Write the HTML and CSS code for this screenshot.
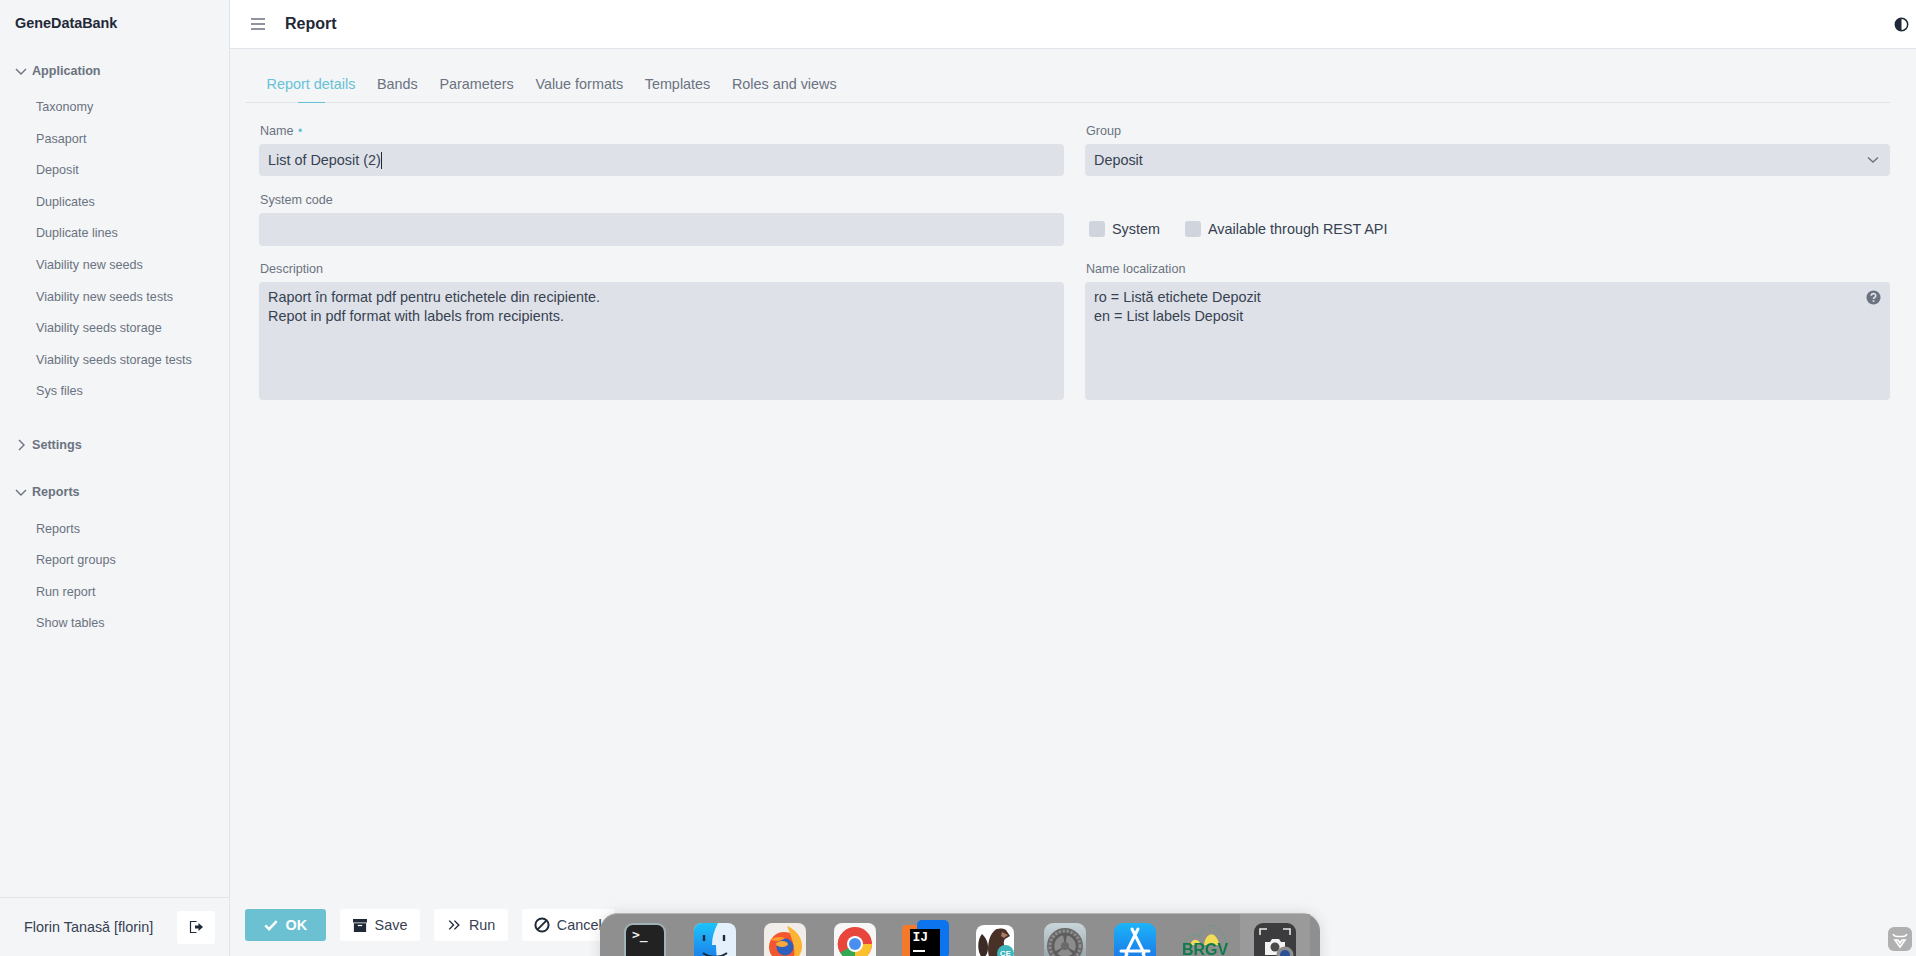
FILE: index.html
```html
<!DOCTYPE html>
<html lang="en">
<head>
	<meta charset="UTF-8">
	<title>Report</title>
	<link rel="stylesheet" href="styles.css">
</head>
<body>
	<div class="app">
		<aside class="sidebar">
			<div class="brand">GeneDataBank</div>
			<nav class="menu">
				<div class="menu-head">
					<svg class="menu-arrow" viewBox="0 0 12 12"><path d="M1 4l5 5 5-5"/></svg>
					<span>Application</span>
				</div>
				<ul class="menu-list">
					<li>Taxonomy</li>
					<li>Pasaport</li>
					<li>Deposit</li>
					<li>Duplicates</li>
					<li>Duplicate lines</li>
					<li>Viability new seeds</li>
					<li>Viability new seeds tests</li>
					<li>Viability seeds storage</li>
					<li>Viability seeds storage tests</li>
					<li>Sys files</li>
				</ul>
				<div class="menu-head">
					<svg class="menu-arrow" viewBox="0 0 12 12"><path d="M4 1l5 5-5 5"/></svg>
					<span>Settings</span>
				</div>
				<div class="menu-head menu-head-next">
					<svg class="menu-arrow" viewBox="0 0 12 12"><path d="M1 4l5 5 5-5"/></svg>
					<span>Reports</span>
				</div>
				<ul class="menu-list menu-list-last">
					<li>Reports</li>
					<li>Report groups</li>
					<li>Run report</li>
					<li>Show tables</li>
				</ul>
			</nav>
			<div class="user">
				<span class="user-name">Florin Tanasă [florin]</span>
				<a class="user-logout" href="#">
					<svg viewBox="0 0 16 16" width="16" height="16"><path class="line" d="M8.5 2.5h-6v11h6"/><path class="fill" d="M7 6.5h3.5V4l4.5 4-4.5 4V9.5H7z"/></svg>
				</a>
			</div>
		</aside>

		<main class="main">
			<header class="topbar">
				<svg class="burger" viewBox="0 0 16 14"><path d="M1 2h14M1 7h14M1 12h14"/></svg>
				<h1 class="title">Report</h1>
				<svg class="theme" viewBox="0 0 16 16"><circle cx="8" cy="8" r="6.6"/><path d="M8 1.4a6.6 6.6 0 0 0 0 13.2z"/></svg>
			</header>

			<div class="content">
				<div class="tabs">
					<a class="tab tab-active" href="#">Report details</a>
					<a class="tab" href="#">Bands</a>
					<a class="tab" href="#">Parameters</a>
					<a class="tab" href="#">Value formats</a>
					<a class="tab" href="#">Templates</a>
					<a class="tab" href="#">Roles and views</a>
				</div>

				<form class="form">
					<div class="field">
						<label>Name <span class="req">•</span></label>
						<div class="input">List of Deposit (2)<span class="caret"></span></div>
					</div>
					<div class="field">
						<label>Group</label>
						<div class="input select">
							Deposit
							<svg class="select-arrow" viewBox="0 0 12 8"><path d="M1 1.5l5 4.5 5-4.5"/></svg>
						</div>
					</div>
					<div class="field">
						<label>System code</label>
						<div class="input input-tall"></div>
					</div>
					<div class="field field-checks">
						<label class="check"><span class="box"></span>System</label>
						<label class="check"><span class="box"></span>Available through REST API</label>
					</div>
					<div class="field">
						<label>Description</label>
						<div class="area">Raport în format pdf pentru etichetele din recipiente.<br>Repot in pdf format with labels from recipients.</div>
					</div>
					<div class="field">
						<label>Name localization</label>
						<div class="area">
							ro = Listă etichete Depozit<br>en = List labels Deposit
							<svg class="help" viewBox="0 0 16 16"><circle cx="8" cy="8" r="7.5"/><path d="M5.6 6.2c0-3 4.8-3 4.8-.1 0 1.9-2.4 1.9-2.4 3.6"/><rect x="7.1" y="10.8" width="1.8" height="1.8"/></svg>
						</div>
					</div>
				</form>
			</div>

			<div class="actions">
				<a class="btn btn-ok" href="#">
					<svg viewBox="0 0 16 16" width="14" height="14"><path d="M1.5 8.5l4.3 4.3 8.7-9.3"/></svg>
					OK
				</a>
				<a class="btn" href="#">
					<svg viewBox="0 0 16 16" width="14" height="14"><path class="fill" d="M0 1h16v4H0zM1 6h14v10H1z"/><path class="cut" d="M5.5 8.6h5"/></svg>
					Save
				</a>
				<a class="btn btn-run" href="#">
					<svg viewBox="0 0 16 16" width="14" height="14"><path class="thin" d="M2.5 3l5 5-5 5M8.5 3l5 5-5 5"/></svg>
					Run
				</a>
				<a class="btn btn-cancel" href="#">
					<svg viewBox="0 0 16 16" width="16" height="16"><circle class="ring" cx="8" cy="8" r="6.6"/><path class="ring" d="M12.6 3.4l-9.2 9.2"/></svg>
					Cancel
				</a>
			</div>
		</main>
	</div>

	<!-- macOS style dock over the page -->
	<div class="dock">
		<div class="dock-cell">
			<div class="icon icon-terminal"><span>&gt;_</span></div>
		</div>
		<div class="dock-cell">
			<svg class="icon" viewBox="0 0 42 42">
				<defs>
					<linearGradient id="finder" x1="0" y1="0" x2="0" y2="1"><stop offset="0" stop-color="#1ec3fa"/><stop offset="1" stop-color="#1a72e8"/></linearGradient>
				</defs>
				<rect width="42" height="42" rx="8" fill="#e4f0fb"/>
				<path d="M8 0h16c-4 8-6 14-6 22h4c0 6 .5 12 2 20H8a8 8 0 0 1-8-8V8a8 8 0 0 1 8-8z" fill="url(#finder)"/>
				<path d="M10 12v6M30 12v6" stroke="#1d2a3a" stroke-width="2.4" fill="none"/>
				<path d="M9 30c7 5 17 5 24 0" stroke="#1d2a3a" stroke-width="2" fill="none"/>
			</svg>
		</div>
		<div class="dock-cell">
			<svg class="icon" viewBox="0 0 42 42">
				<rect width="42" height="42" rx="8" fill="#f1ede9"/>
				<circle cx="20" cy="24" r="15" fill="#f3572f"/>
				<path d="M23 3c8 3 16 11 15 22-1 7-5 11-9 13 3-9 1-18-6-35z" fill="#fbb334"/>
				<circle cx="21" cy="24" r="8.5" fill="#2d5fbd"/>
				<path d="M6 17c4-3 9-4 15-2-2 2-5 3-8 3z" fill="#ff9a2e"/>
				<ellipse cx="18" cy="21" rx="6" ry="3" fill="#f7a83a"/>
			</svg>
		</div>
		<div class="dock-cell">
			<svg class="icon" viewBox="0 0 42 42">
				<rect width="42" height="42" rx="8" fill="#f7f7f7"/>
				<circle cx="21" cy="21" r="17" fill="#e8453c"/>
				<path d="M21 21L6 29.5A17 17 0 0 0 21 38z" fill="#34a853"/>
				<path d="M21 21l-15 8.5A17 17 0 0 1 6.5 12z" fill="#e8453c"/>
				<path d="M21 21h17a17 17 0 0 1-17 17z" fill="#fbc02d"/>
				<circle cx="21" cy="21" r="8" fill="#fff"/>
				<circle cx="21" cy="21" r="6" fill="#4a8ff0"/>
			</svg>
		</div>
		<div class="dock-cell">
			<div class="icon-ij">
				<span class="ij-back-a"></span>
				<span class="ij-back-b"></span>
				<div class="ij-box">IJ<span class="ij-bar"></span></div>
			</div>
		</div>
		<div class="dock-cell">
			<div class="icon-beaver">
				<svg viewBox="0 0 38 38" width="38" height="38">
					<path d="M6 9c-5 6-5 17 0 24 4-1 6-5 6-10 0-6-2-10-6-14z" fill="#3b2a25"/>
					<path d="M13 32c-2-9-1-20 5-26 3-3 8-3 12-1l4 6-5 3c-2 3-1 6 0 8l-5 10z" fill="#4a3128"/>
					<path d="M26 7l6 3-4 3-3-2z" fill="#a87c62"/>
				</svg>
				<span class="beaver-ce">CE</span>
			</div>
		</div>
		<div class="dock-cell">
			<svg class="icon" viewBox="0 0 42 42">
				<defs>
					<linearGradient id="gear" x1="0" y1="0" x2="0" y2="1"><stop offset="0" stop-color="#c8d6da"/><stop offset="1" stop-color="#8f9da3"/></linearGradient>
				</defs>
				<rect width="42" height="42" rx="9" fill="url(#gear)"/>
				<circle cx="21" cy="23" r="18" fill="#6a6a6a"/>
				<circle cx="21" cy="23" r="15" fill="none" stroke="#8f8f8f" stroke-width="3" stroke-dasharray="2 2"/>
				<circle cx="21" cy="23" r="12" fill="#8c8c8c" stroke="#5d5d5d" stroke-width="2.5"/>
				<path d="M21 23l-2-11h4zM21 23l-11 6 2 3zM21 23l11 6-2 3z" fill="#5d5d5d"/>
				<circle cx="21" cy="23" r="4" fill="#6a6a6a"/>
			</svg>
		</div>
		<div class="dock-cell">
			<svg class="icon" viewBox="0 0 42 42">
				<defs>
					<linearGradient id="store" x1="0" y1="0" x2="0" y2="1"><stop offset="0" stop-color="#1cb4f8"/><stop offset="1" stop-color="#1a6fe6"/></linearGradient>
				</defs>
				<rect width="42" height="42" rx="9" fill="url(#store)"/>
				<path d="M24 6L12 30M18 6l12 24M7 28h28M10 36l3-5M32 36l-3-5" stroke="#fff" stroke-width="3" stroke-linecap="round" fill="none"/>
			</svg>
		</div>
		<div class="dock-cell">
			<div class="icon-brgv">
				<svg viewBox="0 0 46 24" width="46" height="24">
					<path d="M1 22C5 12 11 9 17 14 21 4 30-1 36 5c5 5 8 11 9 17" fill="none" stroke="#6f9a80" stroke-width="1"/>
					<path d="M8 22c2-6 7-7 10-2v2zM22 22c1-10 8-14 12-8 2 3 3 5 3 8z" fill="#f1dd56"/>
				</svg>
				<span class="brgv-text">BRGV</span>
			</div>
		</div>
		<div class="dock-cell dock-cell-on">
			<div class="icon-shot">
				<svg viewBox="0 0 42 42" width="42" height="42">
					<path d="M6 12V6h7M29 6h7v6" fill="none" stroke="#e8e8e8" stroke-width="1.6"/>
					<path d="M11 19h5l2-3h7l2 3h4v13H11z" fill="#f2f2f2"/>
					<circle cx="21" cy="24" r="4.5" fill="#4a4a4a"/>
					<circle cx="31" cy="32" r="8.5" fill="#8e8e8e"/>
					<circle cx="31" cy="32" r="5" fill="#2c4f96"/>
				</svg>
			</div>
		</div>
	</div>

	<!-- dev tools badge in the corner -->
	<div class="devtools">
		<svg viewBox="0 0 24 24" width="24" height="24"><path d="M5 7c1 2 2 2.5 4 2.5h6c2 0 3-.5 4-2.5M7 13l5 7 5-7h-3l-2 3-2-3z" fill="none" stroke="#fff" stroke-width="1.6"/></svg>
	</div>
</body>
</html>
```

FILE: styles.css
```css
html, body {
	margin: 0;
	height: 100%;
	overflow: hidden;
}
body {
	background: #f3f5f7;
	color: #374151;
	font-family: "Liberation Sans", Arial, sans-serif;
	font-size: 14.4px;
}
a {
	text-decoration: none;
	color: inherit;
}
ul {
	list-style: none;
	margin: 0;
	padding: 0;
}
.app {
	display: flex;
	height: 956px;
}

/* sidebar */
.sidebar {
	width: 229px;
	flex: none;
	display: flex;
	flex-direction: column;
	border-right: 1px solid #e1e4ea;
}
.brand {
	height: 46px;
	line-height: 46px;
	padding-left: 15px;
	font-size: 14.4px;
	font-weight: 700;
	color: #1f2937;
}
.menu {
	flex: 1;
	padding-top: 9px;
}
.menu-head {
	display: flex;
	align-items: center;
	height: 32px;
	padding-left: 15px;
	font-size: 12.6px;
	font-weight: 700;
	color: #6b7280;
}
.menu-head-next {
	margin-top: 14.4px;
}
.menu-arrow {
	width: 12px;
	height: 12px;
	margin-right: 5px;
	fill: none;
	stroke: #6b7280;
	stroke-width: 1.4;
}
.menu-list {
	margin: 5px 0 21.4px;
}
.menu-list-last {
	margin-top: 5.8px;
}
.menu-list li {
	height: 31.6px;
	line-height: 31.6px;
	padding-left: 36px;
	font-size: 12.6px;
	color: #6b7280;
}
.user {
	height: 58px;
	display: flex;
	align-items: center;
	justify-content: space-between;
	padding: 0 14px 0 24px;
	border-top: 1px solid #e1e4ea;
}
.user-logout {
	width: 38px;
	height: 33px;
	display: flex;
	align-items: center;
	justify-content: center;
	background: #fff;
	border-radius: 3px;
}
.line {
	fill: none;
	stroke: #1f2937;
	stroke-width: 1.2;
}
.fill {
	fill: #1f2937;
}

/* main area */
.main {
	flex: 1;
	min-width: 0;
	display: flex;
	flex-direction: column;
}
.topbar {
	height: 48px;
	flex: none;
	display: flex;
	align-items: center;
	background: #fff;
	border-bottom: 1px solid #e1e4ea;
	padding: 0 7px 0 20px;
}
.burger {
	width: 16px;
	height: 14px;
	fill: none;
	stroke: #6b7280;
	stroke-width: 1.6;
}
.title {
	margin: 0 0 0 19px;
	font-size: 16px;
	font-weight: 700;
	color: #1f2937;
	flex: 1;
}
.theme {
	width: 15px;
	height: 15px;
	fill: #1f2937;
}
.theme circle {
	fill: #fff;
	stroke: #1f2937;
	stroke-width: 1.6;
}
.content {
	flex: 1;
	padding: 0 26px 0 15px;
}
.tabs {
	display: flex;
	gap: 21.6px;
	height: 54px;
	box-sizing: border-box;
	padding: 23px 0 0 21.6px;
	border-bottom: 1px solid #e1e4ea;
}
.tab {
	position: relative;
	height: 31px;
	line-height: 24px;
	color: #6b7280;
}
.tab-active {
	color: #67c2d6;
}
.tab-active::after {
	content: "";
	position: absolute;
	left: 31px;
	bottom: 0;
	width: 27px;
	height: 1px;
	background: #67c2d6;
}

/* form */
.form {
	display: grid;
	grid-template-columns: 805px 805px;
	column-gap: 21px;
	padding: 17px 0 0 14px;
}
.field {
	padding-bottom: 12.5px;
}
.field label {
	display: block;
	height: 24px;
	line-height: 22px;
	padding-left: 1px;
	font-size: 12.6px;
	color: #6b7280;
}
.req {
	color: #67c2d6;
	font-size: 12px;
	margin-left: 1px;
}
.input, .area {
	box-sizing: border-box;
	background: #dee1e8;
	border-radius: 4px;
	color: #374151;
	padding: 0 9px;
}
.input {
	display: flex;
	align-items: center;
	height: 32px;
	margin-bottom: 0.5px;
}
.input-tall {
	height: 32.5px;
	margin-bottom: 0;
}
.caret {
	display: inline-block;
	width: 1px;
	height: 17px;
	background: #1f2937;
}
.select {
	justify-content: space-between;
	padding-right: 11px;
}
.select-arrow {
	width: 12px;
	height: 8px;
	fill: none;
	stroke: #6b7280;
	stroke-width: 1.4;
}
.area {
	position: relative;
	height: 117.5px;
	padding-top: 6px;
	line-height: 19.4px;
}
.help {
	position: absolute;
	top: 8px;
	right: 9px;
	width: 15px;
	height: 15px;
}
.help circle {
	fill: #6b7280;
}
.help path {
	fill: none;
	stroke: #dee1e8;
	stroke-width: 1.8;
}
.help rect {
	fill: #dee1e8;
}
.field-checks {
	display: flex;
	align-items: flex-end;
	gap: 25px;
	padding-left: 4px;
	padding-bottom: 21.5px;
}
.field-checks .check {
	display: flex;
	align-items: center;
	height: 16px;
	line-height: 16px;
	padding: 0;
	font-size: 14.4px;
	color: #374151;
}
.box {
	width: 16px;
	height: 16px;
	margin-right: 7px;
	background: #d0d5dd;
	border-radius: 3px;
}

/* bottom buttons */
.actions {
	flex: none;
	display: flex;
	gap: 14px;
	padding: 0 0 15px 15px;
}
.btn {
	display: flex;
	align-items: center;
	gap: 8px;
	height: 32px;
	padding: 0 13px;
	background: #fff;
	border-radius: 3px;
	color: #374151;
}
.btn .thin, .btn .ring {
	fill: none;
	stroke: #1f2937;
	stroke-width: 1.6;
}
.btn .ring {
	stroke-width: 2;
}
.btn .cut {
	stroke: #fff;
	stroke-width: 1.4;
}
.btn-ok {
	padding: 0 18.5px;
	background: #6bc0d2;
	color: #fff;
	font-weight: 700;
}
.btn-ok svg path {
	fill: none;
	stroke: #fff;
	stroke-width: 2.8;
}
.btn-run {
	padding: 0 12.5px;
}
.btn-cancel svg {
	margin: 0 -1px;
}

/* dock */
.dock {
	position: fixed;
	left: 600px;
	top: 913px;
	width: 720px;
	height: 90px;
	box-sizing: border-box;
	padding: 0 10px;
	display: flex;
	background: #8f8f8f;
	border-top: 1px solid #b4b4b4;
	border-radius: 18px;
	box-shadow: 0 0 14px rgba(0, 0, 0, 0.12);
}
.dock-cell {
	width: 70px;
	flex: none;
	display: flex;
	justify-content: center;
	padding-top: 9px;
}
.dock-cell-on {
	background: #9a9a9a;
}
.icon {
	width: 42px;
	height: 42px;
	flex: none;
}
.icon-terminal {
	box-sizing: border-box;
	background: #222;
	border: 2px solid #9fb3b8;
	border-radius: 9px;
	color: #eee;
	font-family: "DejaVu Sans Mono", monospace;
	font-size: 13px;
	font-weight: 700;
	line-height: 15px;
	padding: 2px 0 0 6px;
}
.icon-ij {
	position: relative;
	width: 47px;
	height: 42px;
	margin-top: -3px;
	flex: none;
}
.ij-back-a {
	position: absolute;
	left: 0;
	top: 5px;
	width: 20px;
	height: 37px;
	background: #f5792a;
	border-radius: 4px 0 0 0;
}
.ij-back-b {
	position: absolute;
	left: 15px;
	top: 0;
	width: 32px;
	height: 38px;
	background: #0c74ee;
	border-radius: 5px;
}
.ij-box {
	position: absolute;
	left: 8px;
	top: 9px;
	width: 30px;
	height: 30px;
	box-sizing: border-box;
	padding: 1px 0 0 3px;
	background: #000;
	color: #fff;
	font-family: "Liberation Mono", monospace;
	font-size: 13px;
	font-weight: 700;
	line-height: 16px;
}
.ij-bar {
	display: block;
	width: 12px;
	height: 2px;
	margin-top: 4px;
	background: #fff;
}
.icon-beaver {
	position: relative;
	width: 38px;
	height: 38px;
	margin-top: 2px;
	background: #fff;
	border-radius: 8px;
	flex: none;
}
.beaver-ce {
	position: absolute;
	right: 0;
	top: 20px;
	width: 17px;
	height: 17px;
	line-height: 17px;
	border-radius: 50%;
	background: #3fb6bd;
	color: #fff;
	font-size: 8px;
	font-weight: 700;
	text-align: center;
}
.icon-brgv {
	position: relative;
	width: 46px;
	height: 42px;
	flex: none;
}
.brgv-text {
	position: absolute;
	left: 0;
	top: 19px;
	width: 46px;
	text-align: center;
	color: #0f7a4c;
	font-size: 16px;
	font-weight: 700;
	line-height: 16px;
}
.icon-shot {
	width: 42px;
	height: 42px;
	background: #3c3c3e;
	border-radius: 9px;
	flex: none;
}
.devtools {
	position: fixed;
	left: 1888px;
	top: 927px;
	width: 24px;
	height: 24px;
	background: #b0b0b0;
	border-radius: 6px;
}
```
